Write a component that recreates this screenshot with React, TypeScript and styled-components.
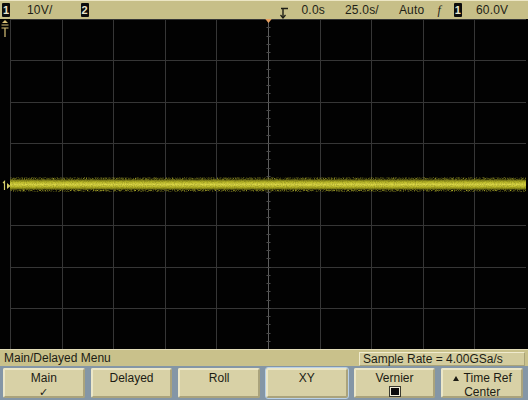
import React from 'react';
import styled, { createGlobalStyle } from 'styled-components';

const GlobalStyle = createGlobalStyle`
  html, body {
    margin: 0;
    padding: 0;
    background: #000;
  }
  body {
    width: 528px;
    height: 400px;
    overflow: hidden;
    font-family: "Liberation Sans", Arial, sans-serif;
  }
`;

const Scope = styled.div`
  width: 528px;
  height: 400px;
  display: flex;
  flex-direction: column;
  background: #000;
`;

const StatusBar = styled.div`
  height: 19px;
  flex: none;
  display: flex;
  align-items: center;
  background: #c7bf88;
  border-top: 1px solid #ece6c4;
  box-sizing: border-box;
  font-size: 12px;
  color: #1e1e16;
  padding-left: 2px;
`;

const Chip = styled.span`
  display: inline-flex;
  align-items: center;
  justify-content: center;
  width: 8px;
  height: 14px;
  background: #0c0c0c;
  color: #e8e4cc;
  font-size: 11px;
  font-weight: bold;
  border-radius: 1px;
`;

const Field = styled.span<{ $left: number }>`
  margin-left: ${(p) => p.$left}px;
  white-space: nowrap;
  letter-spacing: 0.2px;
`;

const Screen = styled.div`
  flex: 1;
  display: flex;
  background: #020202;
`;

const LeftRail = styled.div`
  width: 10px;
  flex: none;
  position: relative;
`;

const Marker = styled.div<{ $top: number }>`
  position: absolute;
  left: 1px;
  top: ${(p) => p.$top}px;
`;

const Graticule = styled.div`
  flex: 1;
`;

const MenuTitleBar = styled.div`
  height: 17px;
  flex: none;
  display: flex;
  align-items: center;
  justify-content: space-between;
  background: #c9c18b;
  border-top: 1px solid #e2dcb8;
  box-sizing: border-box;
  font-size: 12px;
  color: #1c1c14;
  padding: 0 3px 0 4px;
`;

const RateBox = styled.div`
  width: 166px;
  height: 14px;
  box-sizing: border-box;
  display: flex;
  align-items: center;
  padding-left: 3px;
  background: #d3cc9e;
  border: 1px solid #f0ebce;
  border-right-color: #a9a379;
  border-bottom-color: #a9a379;
  margin-top: 2px;
`;

const SoftkeyRow = styled.div`
  height: 34px;
  flex: none;
  display: flex;
  gap: 6px;
  padding: 2px 5px 2px 3px;
  box-sizing: border-box;
  background: #8496a6;
`;

const Softkey = styled.div<{ $selected?: boolean }>`
  flex: 1;
  display: flex;
  flex-direction: column;
  align-items: center;
  justify-content: flex-start;
  padding-top: 1px;
  box-sizing: border-box;
  background: #d8d1a6;
  border: 2px solid #ece7c8;
  border-right-color: #aaa37c;
  border-bottom-color: #aaa37c;
  border-radius: 2px;
  outline: ${(p) => (p.$selected ? '1px solid #b9d0e6' : 'none')};
  font-size: 12px;
  line-height: 14px;
  color: #1c1c14;
`;

const KeyLine = styled.span`
  display: flex;
  align-items: center;
  gap: 5px;
`;

const Box = styled.span`
  width: 8px;
  height: 8px;
  background: #0c0c0c;
  border: 1px solid #f4f0da;
  outline: 1px solid #3a3a30;
  margin-top: 2px;
`;

const W = 516;
const H = 330;
const DX = W / 10;
const DY = H / 8;

function Grid() {
  const lines: React.ReactNode[] = [];
  for (let i = 0; i <= 10; i++) {
    const x = Math.round(i * DX) + 0.5;
    lines.push(<line key={'v' + i} x1={x} y1={0} x2={x} y2={H} stroke="#363636" strokeWidth={1} />);
  }
  for (let j = 0; j <= 8; j++) {
    const y = Math.round(j * DY) + 0.5;
    lines.push(<line key={'h' + j} x1={0} y1={y} x2={W} y2={y} stroke="#363636" strokeWidth={1} />);
  }
  const cx = Math.round(5 * DX) + 0.5;
  const cy = Math.round(4 * DY) + 0.5;
  const ticks: React.ReactNode[] = [];
  for (let j = 0; j < 40; j++) {
    const y = Math.round((j * DY) / 5) + 0.5;
    ticks.push(<line key={'ty' + j} x1={cx - 2} y1={y} x2={cx + 2} y2={y} stroke="#4a4a4a" />);
  }
  for (let i = 0; i < 50; i++) {
    const x = Math.round((i * DX) / 5) + 0.5;
    ticks.push(<line key={'tx' + i} x1={x} y1={cy - 2} x2={x} y2={cy + 2} stroke="#4a4a4a" />);
  }
  return (
    <svg width={W} height={H} viewBox={`0 0 ${W} ${H}`} style={{ display: 'block' }}>
      <defs>
        <linearGradient id="trace" x1="0" y1="0" x2="0" y2="1">
          <stop offset="0" stopColor="#66660f" />
          <stop offset="0.25" stopColor="#bab828" />
          <stop offset="0.5" stopColor="#dcd848" />
          <stop offset="0.75" stopColor="#bab828" />
          <stop offset="1" stopColor="#66660f" />
        </linearGradient>
        <filter id="noise" x="0" y="-0.5" width="1" height="2">
          <feTurbulence type="fractalNoise" baseFrequency="1.1 0.8" numOctaves="2" seed="7" result="n" />
          <feColorMatrix in="n" type="matrix" values="0 0 0 0 0  0 0 0 0 0  0 0 0 0 0  0 0 0 2.2 -0.8" result="a" />
          <feComposite in="SourceGraphic" in2="a" operator="in" />
        </filter>
      </defs>
      {lines}
      <line x1={cx} y1={0} x2={cx} y2={H} stroke="#5e5e5e" strokeWidth={1} />
      {ticks}
      <rect x={0} y={cy - 7} width={W} height={14} fill="#a8a628" filter="url(#noise)" />
      <rect x={0} y={cy - 5} width={W} height={10} fill="url(#trace)" />
      <rect x={0} y={cy - 5} width={W} height={10} fill="#202004" opacity={0.22} filter="url(#noise)" />
      <path d={`M${cx - 4} -1 L${cx + 4} -1 L${cx} 4 Z`} fill="#e8a060" />
    </svg>
  );
}

export default function App() {
  return (
    <>
      <GlobalStyle />
      <Scope>
        <StatusBar>
          <Chip>1</Chip>
          <Field $left={17}>10V/</Field>
          <Chip style={{ marginLeft: 28 }}>2</Chip>
          <svg width="10" height="12" viewBox="0 0 10 12" style={{ marginLeft: 190, marginTop: 6 }}>
            <path d="M2 1.5 H9 M4 1.5 V10" stroke="#1e1e16" strokeWidth="1.4" fill="none" />
            <path d="M1.5 8 L4 11 L6.5 8" stroke="#1e1e16" strokeWidth="1.2" fill="none" />
          </svg>
          <Field $left={13}>0.0s</Field>
          <Field $left={20}>25.0s/</Field>
          <Field $left={20}>Auto</Field>
          <Field $left={13} style={{ fontStyle: 'italic', fontFamily: '"Liberation Serif", serif' }}>f</Field>
          <Chip style={{ marginLeft: 13 }}>1</Chip>
          <Field $left={14}>60.0V</Field>
        </StatusBar>
        <Screen>
          <LeftRail>
            <Marker $top={1}>
              <svg width="8" height="18" viewBox="0 0 8 18">
                <path d="M4 0 L7 3 H1 Z" fill="#d9c278" />
                <path d="M0.5 5 H7.5 M0.5 8 H7.5 M4 8 V17" stroke="#d9c278" strokeWidth="1.2" fill="none" />
              </svg>
            </Marker>
            <Marker $top={159}>
              <svg width="10" height="12" viewBox="0 0 10 12">
                <path d="M2 3 L3.5 1.5 V10" stroke="#d6d06a" strokeWidth="1.2" fill="none" />
                <path d="M6 3 L9.5 6 L6 9 Z" fill="#d6d06a" />
              </svg>
            </Marker>
          </LeftRail>
          <Graticule>
            <Grid />
          </Graticule>
        </Screen>
        <MenuTitleBar>
          <span>Main/Delayed Menu</span>
          <RateBox>Sample Rate = 4.00GSa/s</RateBox>
        </MenuTitleBar>
        <SoftkeyRow>
          <Softkey>
            <span>Main</span>
            <span style={{ fontSize: 11 }}>✓</span>
          </Softkey>
          <Softkey>Delayed</Softkey>
          <Softkey>Roll</Softkey>
          <Softkey $selected>XY</Softkey>
          <Softkey>
            <span>Vernier</span>
            <Box />
          </Softkey>
          <Softkey>
            <KeyLine>
              <svg width="6" height="5" viewBox="0 0 6 5">
                <path d="M3 0 L6 5 H0 Z" fill="#1c1c14" />
              </svg>
              Time Ref
            </KeyLine>
            <span>Center</span>
          </Softkey>
        </SoftkeyRow>
      </Scope>
    </>
  );
}
